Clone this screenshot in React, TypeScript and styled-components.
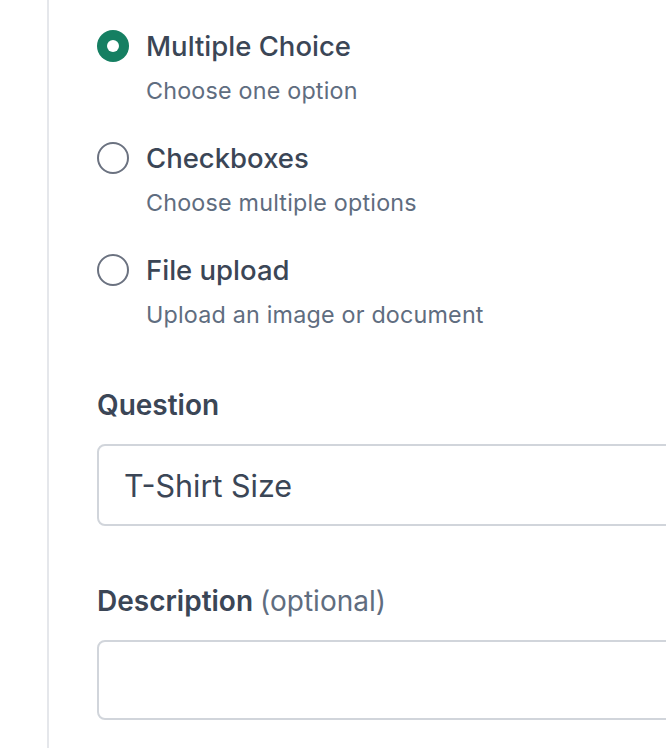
import React from "react";
import styled, { createGlobalStyle } from "styled-components";

const Global = createGlobalStyle`
  html, body { margin: 0; padding: 0; background: #ffffff; }
  body { font-family: Inter, "Noto Sans", sans-serif; -webkit-font-smoothing: antialiased; }
`;

const Page = styled.div`
  display: flex;
  min-height: 748px;
  overflow: hidden;
`;

const Rail = styled.div`
  width: 47px;
  flex: none;
`;

const Panel = styled.div`
  flex: 1;
  border-left: 2px solid #e5e7eb;
  padding: 29px 0 0 48px;
  display: flex;
  flex-direction: column;
  min-width: 0;
`;

const OptionList = styled.div`
  display: flex;
  flex-direction: column;
  gap: 35px;
`;

const Option = styled.label`
  display: grid;
  grid-template-columns: 32px 1fr;
  column-gap: 17px;
  row-gap: 13px;
  align-items: center;
  cursor: pointer;
`;

const Radio = styled.span<{ $checked?: boolean }>`
  box-sizing: border-box;
  width: 32px;
  height: 32px;
  border-radius: 50%;
  display: flex;
  align-items: center;
  justify-content: center;
  background: ${(p) => (p.$checked ? "#157f62" : "#ffffff")};
  border: ${(p) => (p.$checked ? "none" : "2px solid #6b7280")};
  &::after {
    content: "";
    display: ${(p) => (p.$checked ? "block" : "none")};
    width: 12px;
    height: 12px;
    border-radius: 50%;
    background: #ffffff;
  }
`;

const OptionTitle = styled.span`
  font-size: 27.5px;
  line-height: 34px;
  font-weight: 500;
  color: #3b4656;
`;

const OptionDesc = styled.span`
  grid-column: 2;
  font-size: 23.3px;
  line-height: 30px;
  color: #5f6d80;
  letter-spacing: 0.2px;
`;

const Field = styled.div`
  display: flex;
  flex-direction: column;
  gap: 22px;
  margin-right: -40px;
`;

const Label = styled.div`
  font-size: 28px;
  line-height: 34px;
  font-weight: 600;
  color: #3b4656;
`;

const Optional = styled.span`
  font-weight: 400;
  color: #5f6d80;
`;

const Input = styled.div<{ $height: number }>`
  box-sizing: border-box;
  height: ${(p) => p.$height}px;
  border: 2px solid #d1d5db;
  border-radius: 8px;
  padding: 0 25px;
  display: flex;
  align-items: center;
  font-size: 30.5px;
  font-weight: 400;
  color: #3b4656;
`;

const Fields = styled.div`
  display: flex;
  flex-direction: column;
  gap: 58px;
  margin-top: 58px;
`;

const options = [
  { title: "Multiple Choice", desc: "Choose one option", checked: true },
  { title: "Checkboxes", desc: "Choose multiple options", checked: false },
  { title: "File upload", desc: "Upload an image or document", checked: false },
];

export default function App() {
  return (
    <>
      <Global />
      <Page>
        <Rail />
        <Panel>
          <OptionList>
            {options.map((o) => (
              <Option key={o.title}>
                <Radio $checked={o.checked} />
                <OptionTitle>{o.title}</OptionTitle>
                <OptionDesc>{o.desc}</OptionDesc>
              </Option>
            ))}
          </OptionList>
          <Fields>
            <Field>
              <Label>Question</Label>
              <Input $height={82}>T-Shirt Size</Input>
            </Field>
            <Field>
              <Label>
                Description <Optional>(optional)</Optional>
              </Label>
              <Input $height={80} />
            </Field>
          </Fields>
        </Panel>
      </Page>
    </>
  );
}
